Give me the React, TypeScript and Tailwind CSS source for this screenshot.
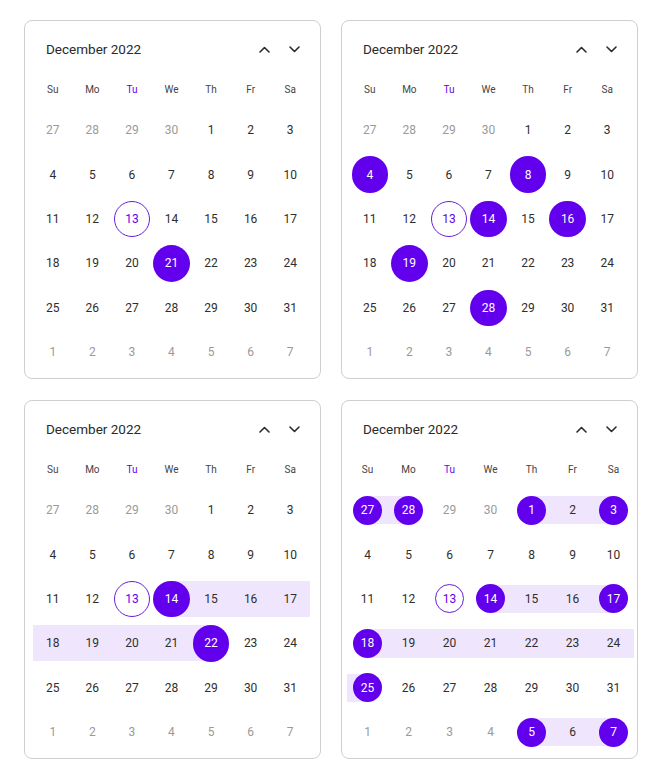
import React from 'react'

type Band = 'full' | 'left' | 'right'

type CardProps = {
  selected?: string[]
  bands?: Record<string, Band>
  compact?: boolean
}

const dayNames = ['Su', 'Mo', 'Tu', 'We', 'Th', 'Fr', 'Sa']

// December 2022, six rows starting on Sunday
const weeks: { d: number; out: boolean }[][] = [
  [27, 28, 29, 30].map((d) => ({ d, out: true })).concat([1, 2, 3].map((d) => ({ d, out: false }))),
  [4, 5, 6, 7, 8, 9, 10].map((d) => ({ d, out: false })),
  [11, 12, 13, 14, 15, 16, 17].map((d) => ({ d, out: false })),
  [18, 19, 20, 21, 22, 23, 24].map((d) => ({ d, out: false })),
  [25, 26, 27, 28, 29, 30, 31].map((d) => ({ d, out: false })),
  [1, 2, 3, 4, 5, 6, 7].map((d) => ({ d, out: true })),
]

function Chevron({ up }: { up?: boolean }) {
  return (
    <svg width="11" height="7" viewBox="0 0 11 7" fill="none">
      <path
        d={up ? 'M1 6L5.5 1.5L10 6' : 'M1 1L5.5 5.5L10 1'}
        stroke="#2b2b2b"
        strokeWidth="1.6"
        strokeLinecap="round"
        strokeLinejoin="round"
      />
    </svg>
  )
}

function Calendar({ selected = [], bands = {}, compact = false }: CardProps) {
  const gridCls = compact ? 'ml-[5px] w-[287px]' : 'ml-[8px] w-[277px]'
  const circleCls = compact ? 'w-[29px] h-[29px]' : 'w-[36.5px] h-[36.5px]'
  const bandCls = compact ? 'h-[28.5px]' : 'h-[36px]'

  return (
    <div className="h-[359px] w-[297px] rounded-[8px] border border-[#cfcfcf] bg-white">
      <div className="mt-[16px] flex h-6 items-center justify-between pl-[21px] pr-[14px]">
        <span className="text-[13.5px] text-[#2a2a2a]">December 2022</span>
        <div className="flex gap-[6px]">
          <button className="flex h-6 w-6 items-center justify-center">
            <Chevron up />
          </button>
          <button className="flex h-6 w-6 items-center justify-center">
            <Chevron />
          </button>
        </div>
      </div>

      <div className={`mt-[10px] grid grid-cols-7 ${gridCls}`}>
        {dayNames.map((n) => (
          <div
            key={n}
            className={`flex h-[37px] items-center justify-center pb-px text-[10px] ${n === 'Tu' ? 'text-[#6200ee]' : 'text-[#444]'}`}
          >
            {n}
          </div>
        ))}
        {weeks.map((week, r) =>
          week.map((cell, c) => {
            const key = `${r}-${c}`
            const band = bands[key]
            const isSel = selected.includes(key)
            const isToday = r === 2 && c === 2
            let text = cell.out ? 'text-[#9a9a9a]' : 'text-[#2e2e2e]'
            if (band && !(cell.out && cell.d < 5)) text = 'text-[#2e2e2e]'
            return (
              <div key={key} className="grid h-[44.4px] place-items-center">
                <div className={`col-start-1 row-start-1 flex w-full ${bandCls}`}>
                  <div className={`flex-1 ${band === 'full' || band === 'left' ? 'bg-[#efe6fd]' : ''}`} />
                  <div className={`flex-1 ${band === 'full' || band === 'right' ? 'bg-[#efe6fd]' : ''}`} />
                </div>
                <div
                  className={`col-start-1 row-start-1 flex items-center justify-center rounded-full text-[12px] ${circleCls} ${
                    isSel
                      ? 'bg-[#6200ee] text-white'
                      : isToday
                        ? 'border border-[#6a1fd8] text-[#6200ee]'
                        : text
                  }`}
                >
                  {cell.d}
                </div>
              </div>
            )
          }),
        )}
      </div>
    </div>
  )
}

export default function App() {
  return (
    <div className="min-h-screen bg-white pl-[24px] pt-[20px]" style={{ fontFamily: 'Roboto, "Noto Sans", sans-serif' }}>
      <div className="grid w-[614px] grid-cols-[297px_297px] gap-x-[20px] gap-y-[21px]">
        <Calendar selected={['3-3']} />
        <Calendar selected={['1-0', '1-4', '2-3', '2-5', '3-1', '4-3']} />
        <Calendar
          selected={['2-3', '3-4']}
          bands={{
            '2-3': 'right',
            '2-4': 'full',
            '2-5': 'full',
            '2-6': 'full',
            '3-0': 'full',
            '3-1': 'full',
            '3-2': 'full',
            '3-3': 'full',
            '3-4': 'left',
          }}
        />
        <Calendar
          compact
          selected={['0-0', '0-1', '0-4', '0-6', '2-3', '2-6', '3-0', '4-0', '5-4', '5-6']}
          bands={{
            '0-0': 'right',
            '0-1': 'left',
            '0-4': 'right',
            '0-5': 'full',
            '0-6': 'left',
            '2-3': 'right',
            '2-4': 'full',
            '2-5': 'full',
            '2-6': 'left',
            '3-0': 'right',
            '3-1': 'full',
            '3-2': 'full',
            '3-3': 'full',
            '3-4': 'full',
            '3-5': 'full',
            '3-6': 'full',
            '4-0': 'left',
            '5-4': 'right',
            '5-5': 'full',
            '5-6': 'left',
          }}
        />
      </div>
    </div>
  )
}
